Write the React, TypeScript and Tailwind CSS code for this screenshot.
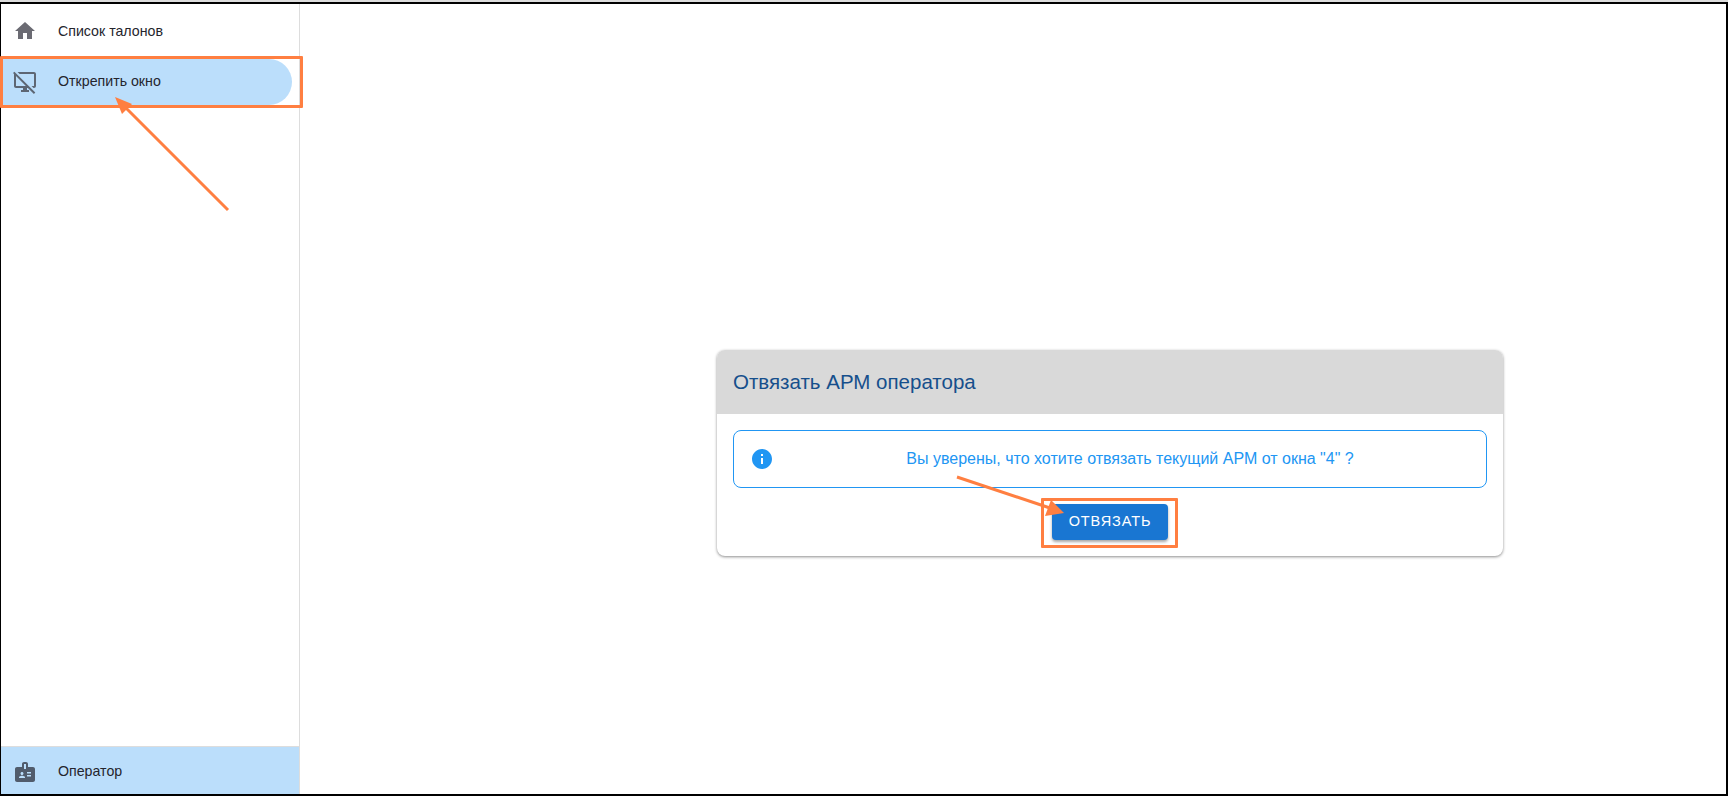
const HOME_PATH = "M10 20v-6h4v6h5v-8h3L12 3 2 12h3v8z";
const DESKTOP_OFF_PATH =
  "M1.41 1.69 0 3.1l1 .99V16c0 1.1.89 2 1.99 2H10v2H8v2h8v-2h-2v-2h.9l6 6 1.41-1.41-20.9-20.9zM2.99 16V6.09L12.9 16H2.99zM4.55 2l2 2H21v12h-2.45l2 2h.44c1.1 0 2-.9 2-2V4c0-1.1-.9-2-2-2H4.55z";
const BADGE_PATH =
  "M20 7h-5V4c0-1.1-.9-2-2-2h-2c-1.1 0-2 .9-2 2v3H4c-1.1 0-2 .9-2 2v11c0 1.1.9 2 2 2h16c1.1 0 2-.9 2-2V9c0-1.1-.9-2-2-2zM9 12c.83 0 1.5.67 1.5 1.5S9.83 15 9 15s-1.5-.67-1.5-1.5S8.17 12 9 12zm3 6H6v-.75c0-1 2-1.5 3-1.5s3 .5 3 1.5V18zm1-9h-2V4h2v5zm5 7.5h-4V15h4v1.5zm0-3h-4V12h4v1.5z";
const INFO_PATH =
  "M12 2C6.48 2 2 6.48 2 12s4.48 10 10 10 10-4.48 10-10S17.52 2 12 2zm1 15h-2v-6h2v6zm0-8h-2V7h2v2z";

function Icon({ d, className }: { d: string; className: string }) {
  return (
    <svg viewBox="0 0 24 24" fill="currentColor" className={className}>
      <path d={d} />
    </svg>
  );
}

function NavRow({ icon, label, active }: { icon: string; label: string; active?: boolean }) {
  return (
    <div
      className={
        active
          ? "flex h-[46px] w-[291px] items-center rounded-r-full bg-[#bbdefb] pl-[12px]"
          : "flex h-[46px] w-[291px] items-center pl-[12px]"
      }
    >
      <Icon d={icon} className={active ? "h-6 w-6 text-[#5d6673]" : "h-6 w-6 text-[#6b6b73]"} />
      <span className={active ? "ml-[21px] text-[14.2px] text-[#25252d]" : "ml-[21px] pt-px text-[14.2px] text-[#25252d]"}>
        {label}
      </span>
    </div>
  );
}

export default function App() {
  return (
    <div className="relative flex h-screen flex-col overflow-hidden bg-white font-['Liberation_Sans',Arial,sans-serif]">
      <div className="h-[2px] shrink-0 bg-[#dcdcdc]" />
      <div className="flex min-h-0 flex-1 border-2 border-l border-black">
        <aside className="flex w-[299px] shrink-0 flex-col border-r border-[#dddddd]">
          <nav className="flex flex-col gap-[5px] pt-[4px]">
            <NavRow icon={HOME_PATH} label="Список талонов" />
            <NavRow icon={DESKTOP_OFF_PATH} label="Открепить окно" active />
          </nav>
          <div className="mt-auto flex h-[48px] items-center border-t border-[#dddddd] bg-[#bbdefb] pl-[12px] pt-[3px]">
            <Icon d={BADGE_PATH} className="h-6 w-6 text-[#515c6c]" />
            <span className="ml-[21px] text-[14.2px] text-[#25252d]">Оператор</span>
          </div>
        </aside>

        <main className="flex-1 pl-[417px] pt-[346px]">
          <section className="w-[786px] overflow-hidden rounded-[8px] bg-white shadow-[0_1px_3px_rgba(0,0,0,0.45)]">
            <header className="flex h-[64px] items-center bg-[#d9d9d9] px-[16px]">
              <h2 className="text-[20.5px] font-normal text-[#164f8c]">Отвязать АРМ оператора</h2>
            </header>
            <div className="flex flex-col items-center px-[16px] pb-[16px] pt-[16px]">
              <div className="flex h-[58px] w-full items-center rounded-[8px] border border-[#2196f3] px-[16px]">
                <Icon d={INFO_PATH} className="h-6 w-6 shrink-0 text-[#2196f3]" />
                <p className="flex-1 pl-[16px] text-center text-[16px] text-[#2196f3]">
                  Вы уверены, что хотите отвязать текущий АРМ от окна "4" ?
                </p>
              </div>
              <button className="mt-[16px] h-[36px] w-[116px] rounded-[4px] bg-[#1976d2] text-[14.5px] tracking-[0.9px] text-white shadow-[0_2px_3px_rgba(0,0,0,0.35)]">
                ОТВЯЗАТЬ
              </button>
            </div>
          </section>
        </main>
      </div>

      {/* annotations drawn on top of the screenshot */}
      <div className="absolute left-0 top-[56px] h-[52px] w-[303px] rounded-[1px] border-[3px] border-[#ff7f41]" />
      <div className="absolute left-[1041px] top-[498px] h-[50px] w-[137px] rounded-[1px] border-[3px] border-[#ff7f41]" />
      <svg className="absolute left-0 top-0 h-full w-full" viewBox="0 0 1728 796" fill="none">
        <line x1="228" y1="210" x2="122" y2="104" stroke="#ff7f41" strokeWidth="3" />
        <polygon points="115,97 132,104 122,114" fill="#ff7f41" />
        <line x1="957" y1="477" x2="1050" y2="508" stroke="#ff7f41" strokeWidth="3" />
        <polygon points="1064,513 1045,516 1051,500" fill="#ff7f41" />
      </svg>
    </div>
  );
}
